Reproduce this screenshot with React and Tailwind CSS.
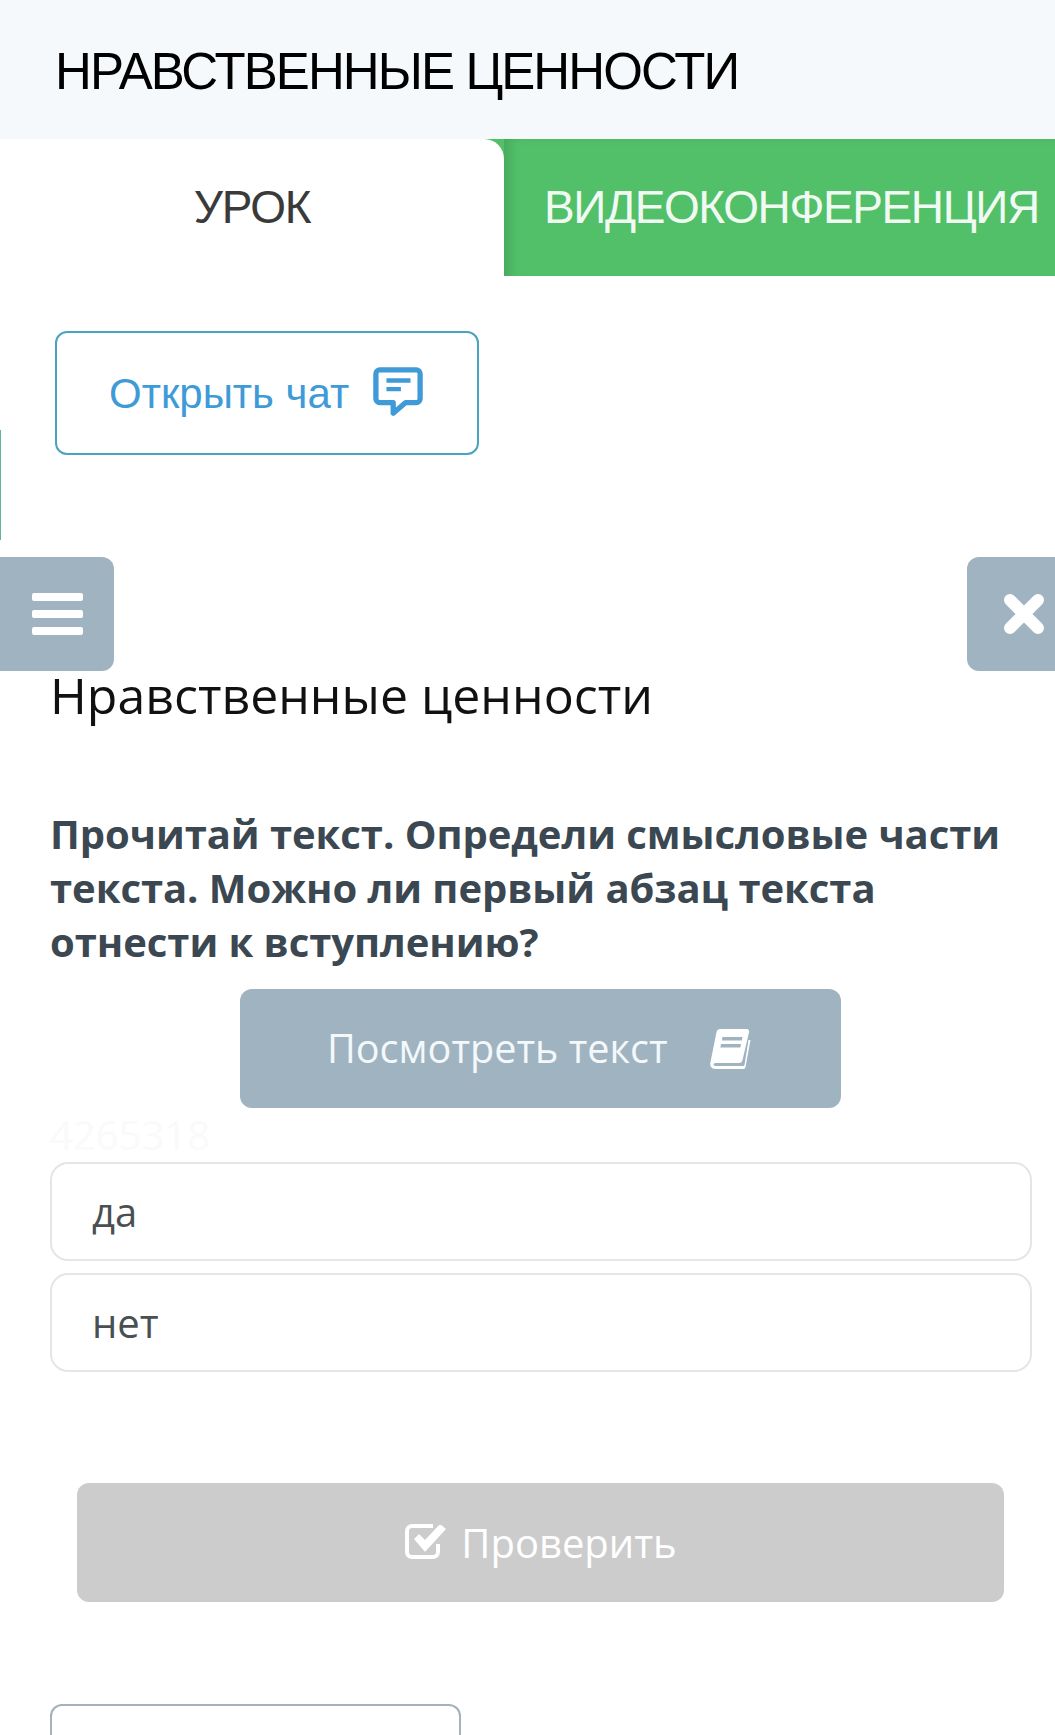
import React from "react";

const open = "font-['Open_Sans',sans-serif]";
const lib = "font-['Liberation_Sans',sans-serif]";

function ChatIcon() {
  return (
    <svg width="50" height="54" viewBox="0 0 52 54" fill="none">
      <path d="M7 4h38a4 4 0 0 1 4 4v26a4 4 0 0 1-4 4H34l-13 11v-11H7a4 4 0 0 1-4-4V8a4 4 0 0 1 4-4z" stroke="#3f9ad8" strokeWidth="5.500" strokeLinejoin="round" />
      <path d="M14 15h25M14 24h15" stroke="#3f9ad8" strokeWidth="4.500" />
    </svg>
  );
}

function BookIcon() {
  return (
    <svg width="45" height="42" viewBox="0 0 42 42">
      <path d="M11 1h26c2 0 3 1.500 2.500 3.500L33 32c-.5 2-1.500 3-3.500 3H6c-2.500 0-2.500 3 0 3h28l1-1 4-25h2l-5 27c-.3 1.500-1 2-2.500 2H6c-4 0-6-3-5-7L7 4c.5-2 2-3 4-3z" fill="#fff" />
      <path d="M13 9h20l-.7 3.500h-20zM11.500 16h20l-.7 3.500h-20z" fill="#9fb3c0" />
    </svg>
  );
}

function CheckIcon() {
  return (
    <svg width="44" height="38" viewBox="0 0 44 38" fill="none">
      <path d="M29 4H8a5 5 0 0 0-5 5v21a5 5 0 0 0 5 5h21a5 5 0 0 0 5-5V22" stroke="#fff" strokeWidth="4" />
      <path d="M9 17l6-6 6 6L36 1l7 6-22 24z" fill="#fff" stroke="#cccccc" strokeWidth="1.500" />
    </svg>
  );
}

export default function App() {
  return (
    <div className={`w-[1055px] h-[1735px] overflow-hidden bg-white ${lib}`}>
      <header className="h-[139px] bg-[#f5f9fc] pl-[55px] pt-[4px] flex items-center">
        <h1 className="text-[51px] font-normal leading-none tracking-[-1.9px] text-black whitespace-nowrap">НРАВСТВЕННЫЕ ЦЕННОСТИ</h1>
      </header>

      <nav className="flex h-[137px] bg-[#52c069]">
        <div className="w-[504px] bg-white rounded-tr-[20px] flex items-center justify-center text-[46px] tracking-[-1.200px] text-[#3a3a3a]">УРОК</div>
        <div className="flex-1 flex items-center pl-[40px] text-[46px] tracking-[-1.400px] text-[#f0faf2] whitespace-nowrap shadow-[inset_12px_3px_12px_-6px_rgba(0,0,0,0.12)]">ВИДЕОКОНФЕРЕНЦИЯ</div>
      </nav>

      <div className="pt-[55px] pl-[55px]">
        <button className="w-[424px] h-[124px] border-2 border-[#4aa3c0] rounded-[12px] flex items-center pl-[52px] text-[42px] text-[#3f9ad8]">
          <span>Открыть чат</span>
          <span className="ml-[24px] -mt-[3px]"><ChatIcon /></span>
        </button>
      </div>

      <div className="w-px h-[110px] mt-[-25px] bg-[#5fb5a0]" />

      <div className="flex justify-between mt-[17px]">
        <div className="w-[114px] h-[114px] bg-[#9fb3c0] rounded-r-[12px] flex flex-col items-center justify-center gap-[9px]">
          <span className="w-[51px] h-[8px] bg-white rounded-[2px]" />
          <span className="w-[51px] h-[8px] bg-white rounded-[2px]" />
          <span className="w-[51px] h-[8px] bg-white rounded-[2px]" />
        </div>
        <div className="w-[88px] h-[114px] bg-[#9fb3c0] rounded-l-[12px] flex items-center pl-[36px]">
          <svg width="42" height="42" viewBox="0 0 42 42"><path d="M7 7l28 28M35 7L7 35" stroke="#fff" strokeWidth="12" strokeLinecap="round" /></svg>
        </div>
      </div>

      <main className={`${open} pl-[50px] pr-[23px]`}>
        <h2 className="text-[50px] leading-[54px] -mt-[3px] font-normal text-[#111111] whitespace-nowrap">Нравственные ценности</h2>
        <p className="mt-[85px] text-[40px] leading-[54px] font-bold tracking-[-0.05px] text-[#3b4852]">
          Прочитай текст. Определи смысловые части<br />текста. Можно ли первый абзац текста<br />отнести к вступлению?
        </p>
        <button className="ml-[190px] mt-[20px] w-[601px] h-[119px] bg-[#9fb3c0] rounded-[12px] flex items-center pl-[87px] text-[39.600px] text-[#f4f8fa]">
          <span>Посмотреть текст</span>
          <span className="ml-[40px]"><BookIcon /></span>
        </button>
        <div className="h-[54px] text-[40px] leading-[54px] text-[#fafafa]">4265318</div>
        <div className="flex flex-col gap-[12px]">
          <div className="h-[99px] border-2 border-[#e3e6e6] rounded-[18px] flex items-center pl-[40px] text-[40px] text-[#4a4f52]">да</div>
          <div className="h-[99px] border-2 border-[#e3e6e6] rounded-[18px] flex items-center pl-[40px] text-[40px] text-[#4a4f52]">нет</div>
        </div>
        <button className="ml-[27px] mt-[111px] w-[927px] h-[119px] bg-[#cccccc] rounded-[12px] flex items-center justify-center text-[40px] text-white">
          <span className="-mt-[4px]"><CheckIcon /></span>
          <span className="ml-[13px]">Проверить</span>
        </button>
        <div className="mt-[102px] w-[411px] h-[60px] border-2 border-b-0 border-[#a5b3b8] rounded-t-[12px]" />
      </main>
    </div>
  );
}
